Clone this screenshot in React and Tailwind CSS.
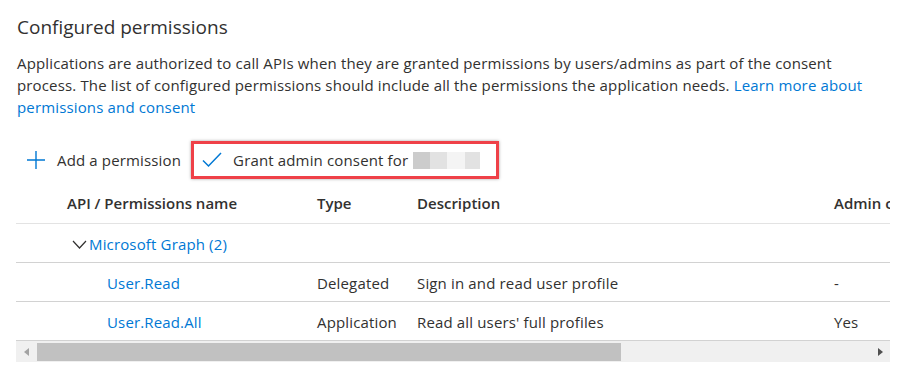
import React from 'react';

const rows = [
  { name: 'User.Read', type: 'Delegated', desc: 'Sign in and read user profile', admin: '-' },
  { name: 'User.Read.All', type: 'Application', desc: "Read all users' full profiles", admin: 'Yes' },
];

const PlusIcon = () => (
  <svg width="20" height="20" viewBox="0 0 20 20" fill="none">
    <path d="M10 1v18M1 10h18" stroke="#0078d4" strokeWidth="1.4" />
  </svg>
);

const CheckIcon = () => (
  <svg width="20" height="16" viewBox="0 0 20 16" fill="none">
    <path d="M1 8.5l5.5 5.5L19 1" stroke="#0078d4" strokeWidth="1.5" />
  </svg>
);

const Chevron = () => (
  <svg width="15" height="9" viewBox="0 0 15 9" fill="none">
    <path d="M1 1l6.5 7L14 1" stroke="#323130" strokeWidth="1.2" />
  </svg>
);

// grid columns shared by header and rows
const cols = 'grid grid-cols-[289px_100px_417px_200px]';

export default function App() {
  return (
    <div
      className="w-[909px] h-[378px] bg-white overflow-hidden pl-[16px] pr-[19px] text-[#323130] tracking-[0.15px]"
      style={{ fontFamily: '"Segoe UI", "Open Sans", sans-serif' }}
    >
      <h2 className="pt-[13px] text-[19px] leading-[28px] pl-[1px] tracking-normal">Configured permissions</h2>

      <p className="mt-[11px] text-[15px] leading-[22px] pl-[1px]">
        Applications are authorized to call APIs when they are granted permissions by users/admins as part of the consent
        <br />
        process. The list of configured permissions should include all the permissions the application needs.{' '}
        <a className="text-[#0078d4]">Learn more about</a>
        <br />
        <a className="text-[#0078d4]">permissions and consent</a>
      </p>

      {/* toolbar */}
      <div className="mt-[23px] flex items-center h-[38px]">
        <button className="flex items-center gap-[11px] pl-[10px] text-[15px]">
          <PlusIcon />
          <span>Add a permission</span>
        </button>
        <div className="ml-[10px] h-[38px] flex items-center border-[3px] border-[#ef4148] shadow-[0_0_3px_rgba(0,0,0,0.35)] pl-[8px] pr-[16px]">
          <button className="flex items-center gap-[11px] text-[15px]">
            <CheckIcon />
            <span>Grant admin consent for</span>
          </button>
          <div className="ml-[5px] flex h-[17px]">
            <div className="w-[17px] bg-[#cccccc]" />
            <div className="w-[17px] bg-[#e2e2e2]" />
            <div className="w-[18px] bg-[#f4f4f4]" />
            <div className="w-[15px] bg-[#e2e2e2]" />
          </div>
        </div>
      </div>

      {/* table */}
      <div className="mt-[5px] overflow-hidden text-[15px]">
        <div className={`${cols} h-[40px] items-center border-b border-[#e3e3e3] font-semibold tracking-normal`}>
          <div className="pl-[51px] whitespace-nowrap">API / Permissions name</div>
          <div className="pl-[12px]">Type</div>
          <div className="pl-[12px]">Description</div>
          <div className="pl-[12px] whitespace-nowrap">Admin consent required</div>
        </div>
        <div className="h-[39px] flex items-center border-b border-[#d2d2d2] pl-[56px] pt-[2px] gap-[2px]">
          <Chevron />
          <a className="text-[#0078d4]">Microsoft Graph (2)</a>
        </div>
        {rows.map((r) => (
          <div key={r.name} className={`${cols} h-[39px] items-center border-b border-[#d2d2d2] pt-[3px]`}>
            <div className="pl-[91px] text-[#0078d4]">{r.name}</div>
            <div className="pl-[12px]">{r.type}</div>
            <div className="pl-[12px]">{r.desc}</div>
            <div className="pl-[12px]">{r.admin}</div>
          </div>
        ))}
      </div>

      {/* horizontal scrollbar */}
      <div className="flex h-[21px] bg-[#f0f0f0]">
        <div className="w-[21px] flex items-center justify-center">
          <div className="w-0 h-0 border-y-[4.5px] border-y-transparent border-r-[5px] border-r-[#a3a3a3]" />
        </div>
        <div className="flex-1 pt-[2px] pb-[1px]">
          <div className="w-[584px] h-full bg-[#c1c1c1]" />
        </div>
        <div className="w-[20px] flex items-center justify-center">
          <div className="w-0 h-0 border-y-[4.5px] border-y-transparent border-l-[5px] border-l-[#505050]" />
        </div>
      </div>
    </div>
  );
}
